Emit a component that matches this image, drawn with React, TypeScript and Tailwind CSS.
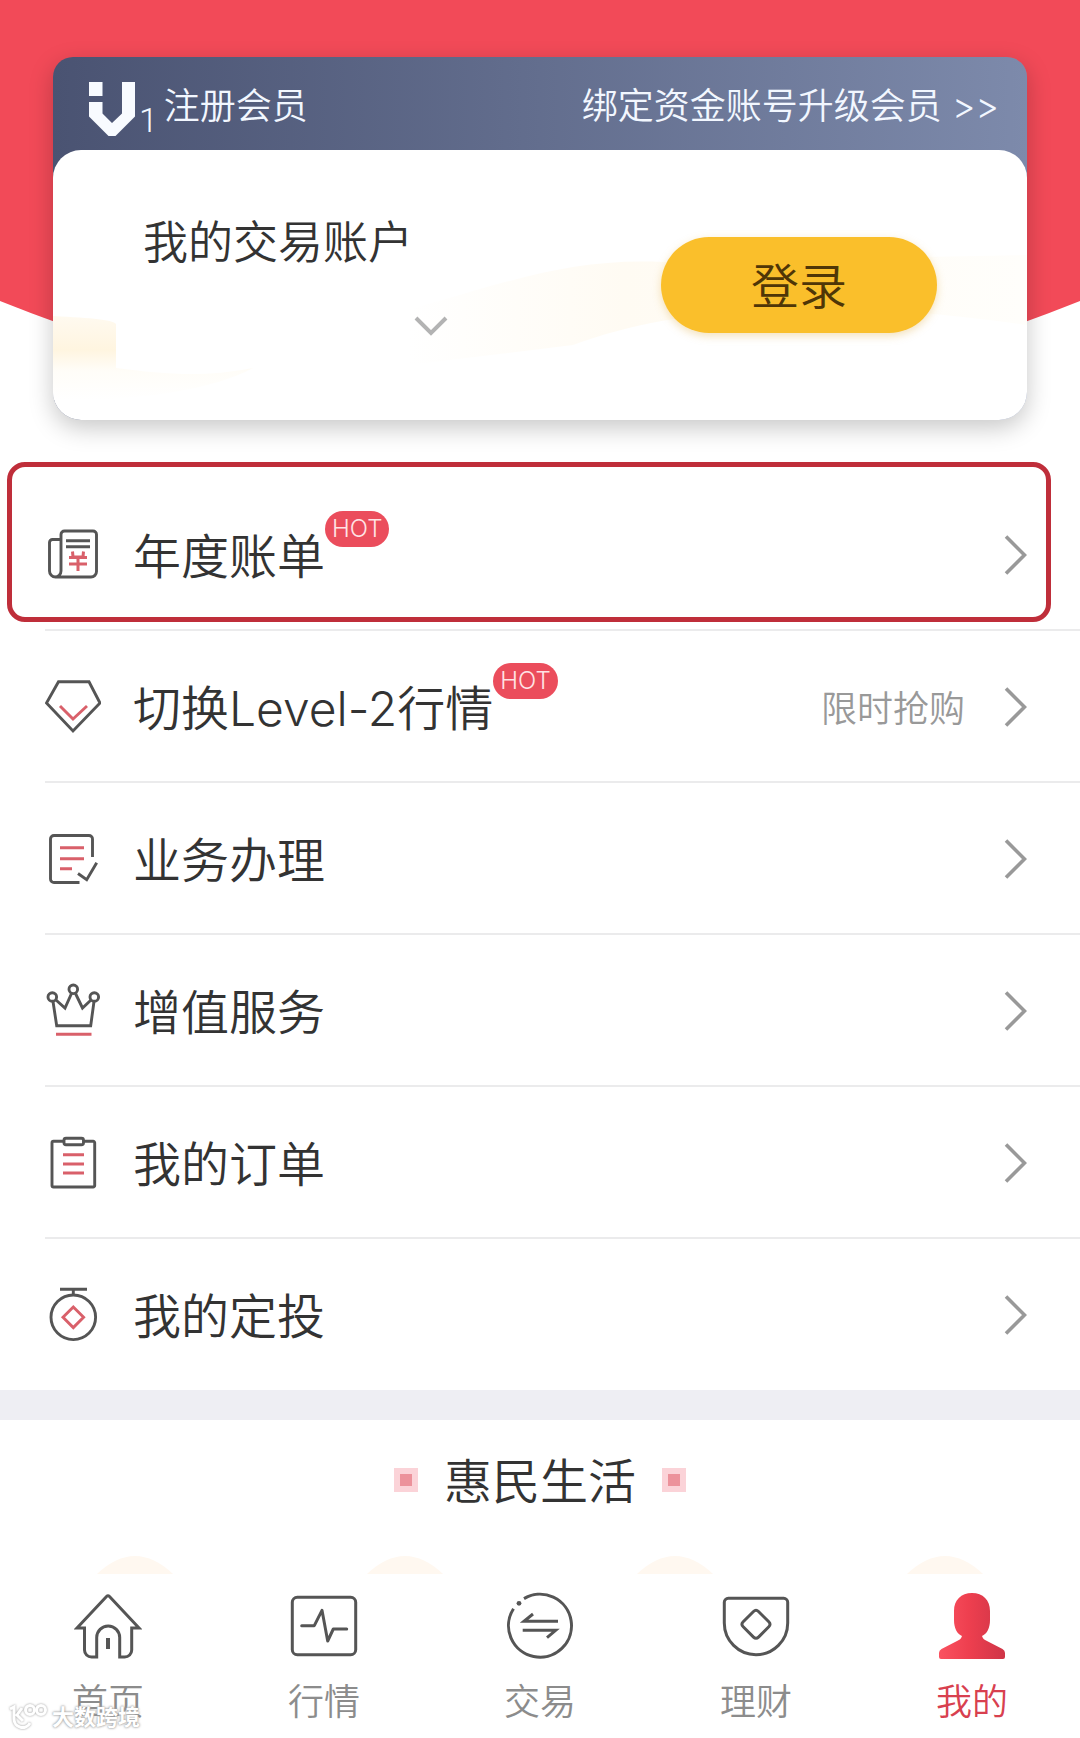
import type { ReactNode } from 'react';

const DARK = '#555555';
const RED = '#d9606a';

interface MenuItem {
  label: string;
  icon: ReactNode;
  hot?: boolean;
  note?: string;
  highlighted?: boolean;
}

interface TabItem {
  label: string;
  icon: ReactNode;
  active?: boolean;
}

function MenuIcon({ children }: { children: ReactNode }) {
  return (
    <svg viewBox="0 0 56 56" className="size-14 shrink-0" fill="none" stroke={DARK} strokeWidth="2.9" aria-hidden="true">
      {children}
    </svg>
  );
}

function TabIcon({ children }: { children: ReactNode }) {
  return (
    <svg viewBox="0 0 68 68" className="size-[68px]" fill="none" stroke={DARK} strokeWidth="3" aria-hidden="true">
      {children}
    </svg>
  );
}

const menuItems: MenuItem[] = [
  {
    label: '年度账单',
    hot: true,
    highlighted: true,
    icon: (
      <MenuIcon>
        <path d="M16 44V7.5a3.5 3.5 0 0 1 3.5-3.5h28.5a3.5 3.5 0 0 1 3.5 3.5v37a5.5 5.5 0 0 1-5.5 5.5H10.5a6 6 0 0 1-6-6V15.5a3 3 0 0 1 3-3H16M16 44a6 6 0 0 1-6 6" />
        <path d="M21 13.7h24M21 19.7h24" />
        <path d="M27.5 24.5l.5 5.5h10l.5-5.5M33 30v14M24 30.5h18M24 37h18" stroke={RED} strokeWidth="3" />
      </MenuIcon>
    ),
  },
  {
    label: '切换Level-2行情',
    hot: true,
    note: '限时抢购',
    icon: (
      <MenuIcon>
        <path d="M13.5 2.8h30.5L55 24 28 52 1.5 24z" />
        <path d="M15 27l13 13 14-13" stroke={RED} />
      </MenuIcon>
    ),
  },
  {
    label: '业务办理',
    icon: (
      <MenuIcon>
        <path d="M47.5 26V8a3.5 3.5 0 0 0-3.5-3.5H9A3.5 3.5 0 0 0 5.5 8v40A3.5 3.5 0 0 0 9 51.5h25.5" />
        <path d="M33 42.5l8.7 6.2 10-17" />
        <path d="M15 16.7h24M15 27.7h24M15 37.7h12" stroke={RED} />
      </MenuIcon>
    ),
  },
  {
    label: '增值服务',
    icon: (
      <MenuIcon>
        <circle cx="7.3" cy="14" r="4.3" />
        <circle cx="28.3" cy="6.3" r="4.3" />
        <circle cx="49.3" cy="14" r="4.3" />
        <path d="M8 18.5l3.7 24.2h34L49 18.5M11 17l9 8 6.5-14.5M30.5 10.5L37.5 25l8.5-8" />
        <path d="M11 51.3h35.5" stroke={RED} />
      </MenuIcon>
    ),
  },
  {
    label: '我的订单',
    icon: (
      <MenuIcon>
        <path d="M19 6.3H8.5A1.5 1.5 0 0 0 7 7.8v42.7A1.5 1.5 0 0 0 8.5 52h39.7a1.5 1.5 0 0 0 1.5-1.5V7.8a1.5 1.5 0 0 0-1.5-1.5H38.5" />
        <rect x="19" y="3.2" width="19.5" height="6.5" rx="2" />
        <path d="M18 19.7h21M18 29h21M18 38h21" stroke={RED} />
      </MenuIcon>
    ),
  },
  {
    label: '我的定投',
    icon: (
      <MenuIcon>
        <path d="M15 2.2h27M28.3 2.2v5.6" />
        <circle cx="28.3" cy="30.3" r="22.3" />
        <path d="M28.3 20l10.3 10.3-10.3 10.3L18 30.3z" stroke={RED} />
      </MenuIcon>
    ),
  },
];

const tabItems: TabItem[] = [
  {
    label: '首页',
    icon: (
      <TabIcon>
        <path d="M10.5 36H3L32.5 4.5q1.5-1.5 3 0L65 36h-7.3v22a7 7 0 0 1-7 7h-5V45.5a11.5 11.5 0 0 0-23 0V65H17.5a7 7 0 0 1-7-7z" />
        <path d="M34 46v11" strokeWidth="4" />
      </TabIcon>
    ),
  },
  {
    label: '行情',
    icon: (
      <TabIcon>
        <rect x="2.3" y="5.3" width="63.4" height="57.4" rx="5" />
        <path d="M11.7 33.7h12.6L32 18.3 37.7 49l5.6-12h13.4" strokeLinecap="round" strokeLinejoin="round" />
      </TabIcon>
    ),
  },
  {
    label: '交易',
    icon: (
      <TabIcon>
        <path d="M18 6.6A31.5 31.5 0 1 1 7.5 16.7" />
        <circle cx="13" cy="11.3" r="2.4" fill={DARK} stroke="none" />
        <path d="M52 29.3H18l9-7.3M16.7 38.3h33L41 45.7" />
      </TabIcon>
    ),
  },
  {
    label: '理财',
    icon: (
      <TabIcon>
        <path d="M6.3 6.3h55.4a4 4 0 0 1 4 4V31a31.7 31.7 0 0 1-63.4 0V10.3a4 4 0 0 1 4-4z" />
        <path d="M31.5 19.5q2.5-2.5 5 0l10.3 10.3q2.5 2.5 0 5l-10.3 10.3q-2.5 2.5-5 0l-10.3-10.3q-2.5-2.5 0-5z" />
      </TabIcon>
    ),
  },
  {
    label: '我的',
    active: true,
    icon: (
      <TabIcon>
        <defs>
          <linearGradient id="person" x1="0" x2="1" y1="0" y2="0">
            <stop offset="0" stopColor="#fa5260" />
            <stop offset="0.45" stopColor="#ee3f4f" />
            <stop offset="1" stopColor="#cf3547" />
          </linearGradient>
        </defs>
        <path
          d="M34 1C23 1 16 8 16 19v9c0 8 3 14 8 16-1 3-2 3.5-4 4.5L3.5 57Q1 58.5 1 61v4q0 2 2 2h62q2 0 2-2v-4q0-2.5-2.5-4L48 48.5c-2-1-3-1.5-4-4.5 5-2 8-8 8-16v-9C52 8 45 1 34 1z"
          fill="url(#person)"
          stroke="none"
        />
      </TabIcon>
    ),
  },
];

function HotBadge() {
  return (
    <span className="absolute -top-4 left-full rounded-full bg-[#eb4d5c] px-[7px] text-2xl leading-9 font-light text-[#ffe3e5]">
      HOT
    </span>
  );
}

function MenuRow({ item, last }: { item: MenuItem; last: boolean }) {
  return (
    <li className="relative pl-[45px]">
      <a
        href="#"
        className={`flex items-center pt-12 pr-[53px] ${last ? 'pb-[47px]' : 'border-b-2 border-[#ebebec] pb-[46px]'}`}
      >
        {item.icon}
        <span className="relative ml-8 pt-1 text-5xl leading-[52px] whitespace-nowrap text-[#333333]">
          {item.label}
          {item.hot && <HotBadge />}
        </span>
        <span className="ml-auto pt-1 text-4xl leading-[52px] text-[#999999]">{item.note}</span>
        <svg viewBox="0 0 24 40" className="ml-[38px] h-10 w-6 shrink-0" fill="none" stroke="#999999" strokeWidth="3.6" aria-hidden="true">
          <path d="M3 1.5L21.5 20 3 38.5" />
        </svg>
      </a>
      {item.highlighted && (
        <div className="pointer-events-none absolute -top-[17px] right-[29px] bottom-[9px] left-[7px] rounded-[18px] border-5 border-[#bf2e3a]" />
      )}
    </li>
  );
}

function AccountCard() {
  return (
    <section className="relative rounded-t-[20px] rounded-b-[28px] bg-linear-to-r from-[#4a5372] to-[#7d8aab] shadow-[0_8px_24px_rgba(0,0,0,0.22)]">
      <div className="flex items-center justify-between pt-[19px] pr-7 pb-[14px] pl-9 text-4xl leading-[60px] text-[#f2f7ff]">
        <div className="flex items-center">
          <svg viewBox="0 0 46 54" className="mt-[6px] h-[54px] w-[46px]" fill="#f8fbff" aria-hidden="true">
            <path d="M0 0h13.5v14H0zM0 20h13.5v11.500L23 41l10-9.500V0h13v34.500L26.500 54h-7L0 34.500z" />
          </svg>
          <span className="ml-1 self-end font-[Roboto,sans-serif] text-[34px] leading-8">1</span>
          <span className="ml-[6px]">注册会员</span>
        </div>
        <a href="#">绑定资金账号升级会员 &gt;&gt;</a>
      </div>

      <div className="relative overflow-hidden rounded-[28px] bg-white">
        {/* faint gold ribbons behind the account row */}
        <svg viewBox="0 0 974 270" preserveAspectRatio="none" className="absolute inset-0 size-full" aria-hidden="true">
          <defs>
            <linearGradient id="wave" x1="0" x2="0" y1="0" y2="1">
              <stop offset="0" stopColor="#fffaf0" />
              <stop offset="0.4" stopColor="#fff5e0" />
              <stop offset="0.65" stopColor="#fffdf8" />
              <stop offset="1" stopColor="#ffffff" />
            </linearGradient>
            <linearGradient id="ribbon" x1="0" x2="1" y1="0" y2="0">
              <stop offset="0" stopColor="#ffffff" />
              <stop offset="0.35" stopColor="#fffbf3" />
              <stop offset="1" stopColor="#fffefb" />
            </linearGradient>
          </defs>
          <path d="M355 160C460 130 520 108 610 112L974 105v70C800 150 640 150 520 195L355 215z" fill="url(#ribbon)" />
          <path d="M0 166C40 168 60 170 63 174V218C110 224 150 228 200 218C160 240 80 252 0 250z" fill="url(#wave)" />
        </svg>
        <div className="relative flex items-center justify-between px-[90px] py-[63px]">
          <div>
            <h1 className="text-[45px] leading-[60px] text-[#333333]">我的交易账户</h1>
            <button type="button" aria-label="切换账户" className="mt-[34px] ml-[270px] block pt-2 pb-5">
              <svg viewBox="0 0 36 22" className="h-[22px] w-9" fill="none" stroke="#b3b3b3" strokeWidth="4" aria-hidden="true">
                <path d="M3 3l15 15L33 3" />
              </svg>
            </button>
          </div>
          <button
            type="button"
            className="rounded-full bg-[#fabf2b] px-[90px] pt-5 pb-4 text-5xl leading-[60px] text-[#4f3607] shadow-[0_3px_8px_rgba(220,170,60,0.35)]"
          >
            登录
          </button>
        </div>
      </div>
    </section>
  );
}

function TitleMark() {
  return <span className="size-6 border-6 border-[#fbd3d8] bg-[#ec929b]" />;
}

function Watermark() {
  return (
    <div className="pointer-events-none absolute bottom-1 left-2 flex items-center gap-1">
      <svg viewBox="0 0 40 30" className="h-[30px] w-10 drop-shadow-[0_0_1px_#999999]" fill="none" stroke="#ffffff" strokeWidth="3" aria-hidden="true">
        <path d="M2 7l4-2v12a8.5 8.5 0 0 0 16 4M14 6l-5 7 6 6" />
        <circle cx="22" cy="8" r="4.5" />
        <circle cx="33" cy="8" r="4.5" />
      </svg>
      <span className="text-[22px] leading-8 font-bold text-white [text-shadow:0_0_2px_#999999,0_0_3px_#aaaaaa]">
        大数跨境
      </span>
    </div>
  );
}

export default function App() {
  return (
    <div className="relative bg-white font-[Inter,'Noto_Sans_CJK_SC',sans-serif] font-[350]">
      <header className="relative px-[53px] pt-[57px] pb-[59px]">
        <svg viewBox="0 0 1080 420" preserveAspectRatio="none" className="absolute top-0 left-0 h-[420px] w-full" aria-hidden="true">
          <path d="M0 0h1080v301Q540 518 0 301z" fill="#f24a58" />
        </svg>
        <AccountCard />
      </header>

      <ul>
        {menuItems.map((item, i) => (
          <MenuRow key={item.label} item={item} last={i === menuItems.length - 1} />
        ))}
      </ul>

      <section className="border-t-30 border-[#eeeef3]">
        <div className="flex items-center justify-center gap-[26px] pt-7 pb-11">
          <TitleMark />
          <h2 className="pt-1 text-5xl leading-[60px] text-[#333333]">惠民生活</h2>
          <TitleMark />
        </div>
        {/* tops of the service tiles peeking out above the tab bar */}
        <div className="grid grid-cols-4 justify-items-center">
          {[0, 1, 2, 3].map((n) => (
            <svg key={n} viewBox="0 0 76 18" className="h-[18px] w-[76px]" aria-hidden="true">
              <path d="M0 18Q38-18 76 18z" fill="#fff8f0" />
            </svg>
          ))}
        </div>
      </section>

      <nav className="grid grid-cols-5 pt-[18px] pb-3">
        {tabItems.map((tab) => (
          <a
            key={tab.label}
            href="#"
            className={`flex flex-col items-center gap-5 text-4xl leading-[45px] ${tab.active ? 'text-[#d8404f]' : 'text-[#8c8c8c]'}`}
          >
            {tab.icon}
            {tab.label}
          </a>
        ))}
      </nav>

      <Watermark />
    </div>
  );
}
